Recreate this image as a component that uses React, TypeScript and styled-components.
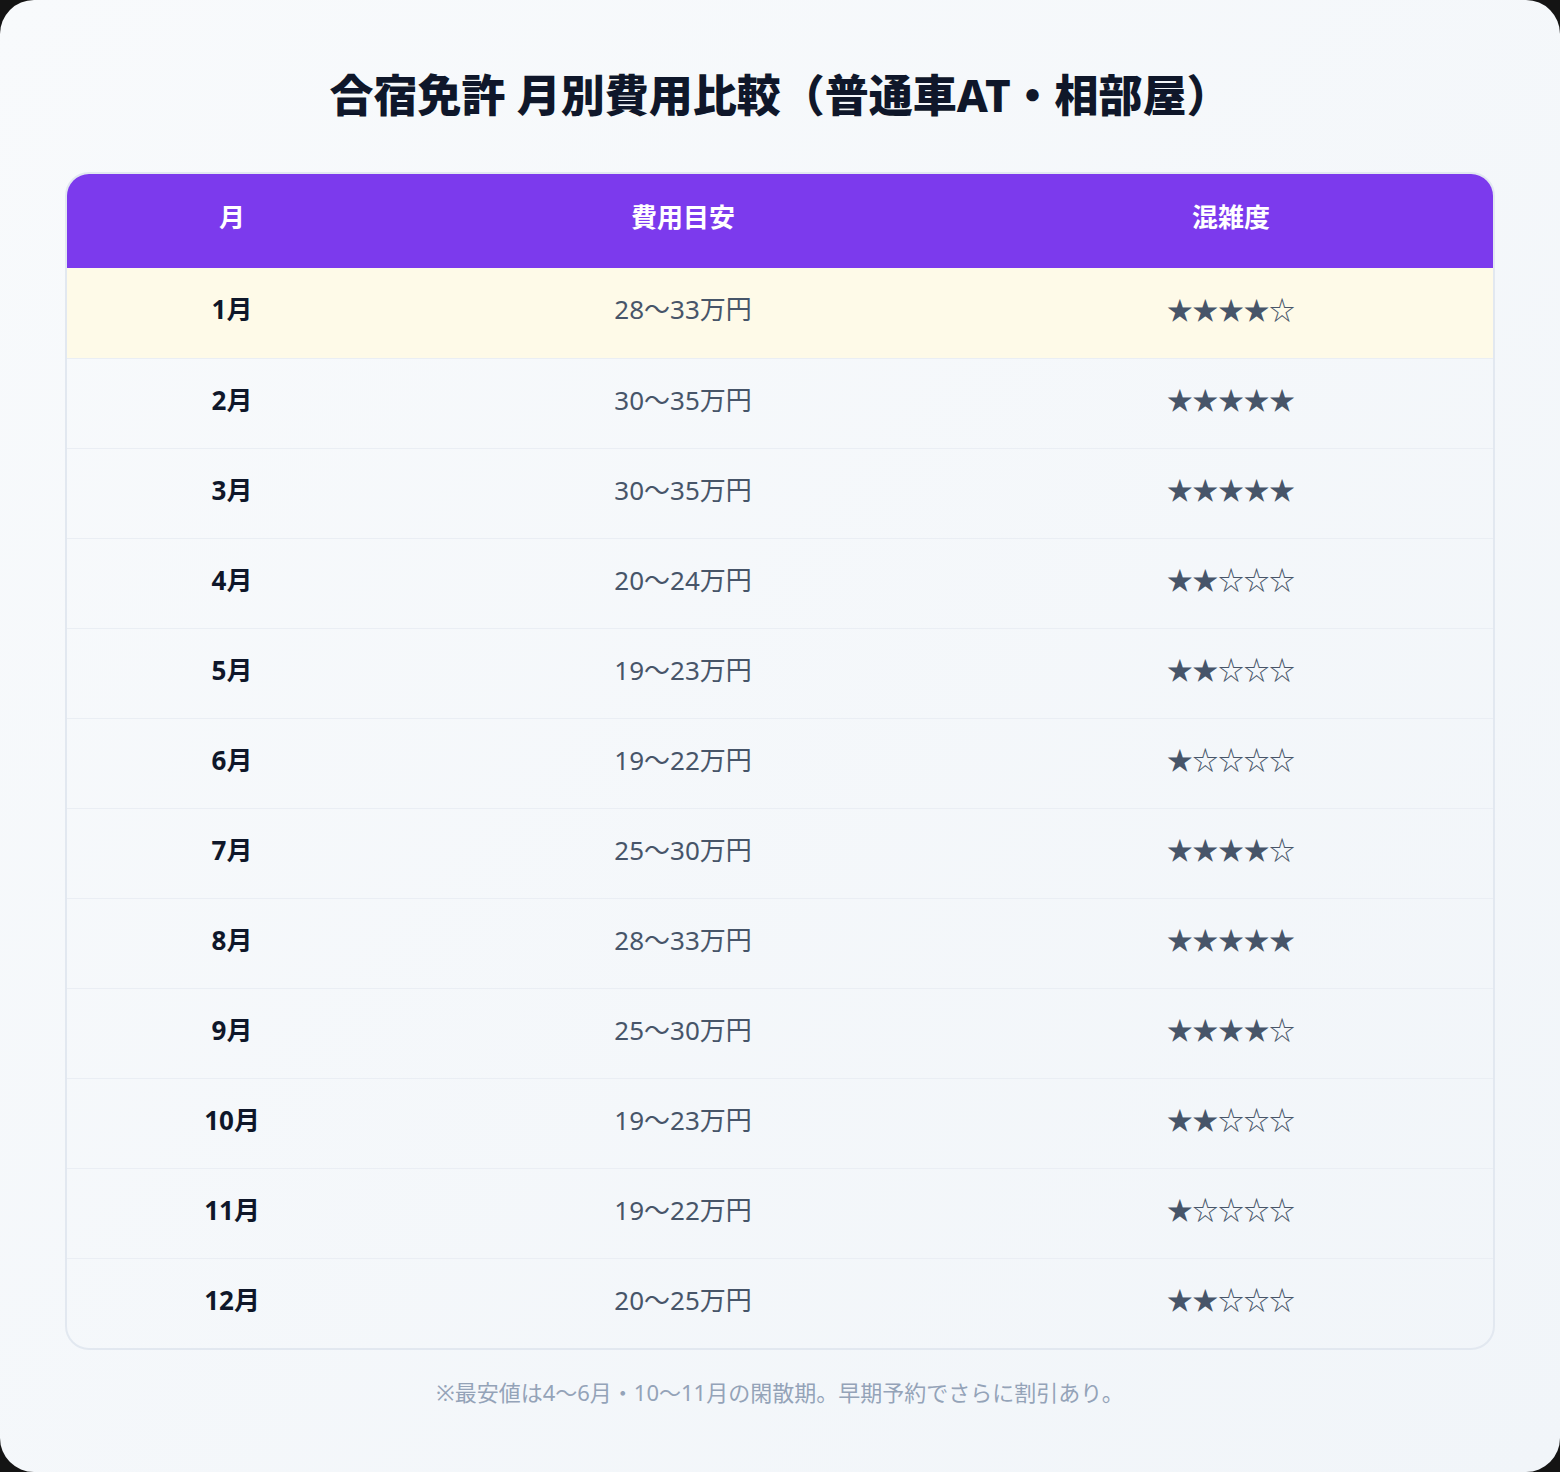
import React from "react";
import styled, { createGlobalStyle } from "styled-components";

interface MonthRow {
  month: string;
  cost: string;
  level: number;
}

const rows: MonthRow[] = [
  { month: "1月", cost: "28〜33万円", level: 4 },
  { month: "2月", cost: "30〜35万円", level: 5 },
  { month: "3月", cost: "30〜35万円", level: 5 },
  { month: "4月", cost: "20〜24万円", level: 2 },
  { month: "5月", cost: "19〜23万円", level: 2 },
  { month: "6月", cost: "19〜22万円", level: 1 },
  { month: "7月", cost: "25〜30万円", level: 4 },
  { month: "8月", cost: "28〜33万円", level: 5 },
  { month: "9月", cost: "25〜30万円", level: 4 },
  { month: "10月", cost: "19〜23万円", level: 2 },
  { month: "11月", cost: "19〜22万円", level: 1 },
  { month: "12月", cost: "20〜25万円", level: 2 },
];

const stars = (n: number) => "★".repeat(n) + "☆".repeat(5 - n);

export default function App() {
  return (
    <>
      <GlobalStyle />
      <Page>
        <Title>合宿免許 月別費用比較（普通車AT・相部屋）</Title>
        <TableWrap>
          <Table>
            <colgroup>
              <col style={{ width: "23.15%" }} />
              <col style={{ width: "40.1%" }} />
              <col />
            </colgroup>
            <thead>
              <tr>
                <HeadCell>月</HeadCell>
                <HeadCell>費用目安</HeadCell>
                <HeadCell>混雑度</HeadCell>
              </tr>
            </thead>
            <tbody>
              {rows.map((r, i) => (
                <Row key={r.month} $highlight={i === 0} $last={i === rows.length - 1}>
                  <MonthCell>{r.month}</MonthCell>
                  <CostCell>{r.cost}</CostCell>
                  <StarCell>{stars(r.level)}</StarCell>
                </Row>
              ))}
            </tbody>
          </Table>
        </TableWrap>
        <Note>※最安値は4〜6月・10〜11月の閑散期。早期予約でさらに割引あり。</Note>
      </Page>
    </>
  );
}

const GlobalStyle = createGlobalStyle`
  html, body {
    margin: 0;
    padding: 0;
    background: #141414;
  }
  body {
    font-family: "Noto Sans", "Noto Sans CJK JP", sans-serif;
  }
`;

const Page = styled.div`
  box-sizing: border-box;
  width: 1560px;
  height: 1472px;
  border-radius: 34px;
  overflow: hidden;
  background: linear-gradient(135deg, #f8fafc 0%, #f1f5f9 100%);
  padding: 63px 65px 0;
`;

const Title = styled.h1`
  margin: 0 0 45px;
  text-align: center;
  font-size: 44px;
  line-height: 64px;
  font-weight: 800;
  color: #0f172a;
`;

const TableWrap = styled.div`
  border: 2px solid #e2e8f0;
  border-radius: 24px;
  overflow: hidden;
`;

const Table = styled.table`
  width: 100%;
  border-collapse: collapse;
  table-layout: fixed;
`;

const HeadCell = styled.th`
  box-sizing: border-box;
  height: 94px;
  padding: 0 0 10px;
  background: #7c3aed;
  color: #ffffff;
  font-size: 26px;
  font-weight: 700;
  text-align: center;
`;

const Row = styled.tr<{ $highlight: boolean; $last: boolean }>`
  height: 90px;
  background: ${(p) => (p.$highlight ? "#fefae8" : "transparent")};
  border-bottom: ${(p) => (p.$last ? "none" : "1px solid #eaeef4")};
`;

const Cell = styled.td`
  box-sizing: border-box;
  height: 90px;
  padding: 0 0 9px;
  text-align: center;
  font-size: 26px;
  vertical-align: middle;
`;

const MonthCell = styled(Cell)`
  font-weight: 700;
  color: #0f172a;
`;

const CostCell = styled(Cell)`
  color: #475569;
`;

const StarCell = styled(Cell)`
  color: #475569;
  font-family: "Noto Sans CJK JP", sans-serif;
  font-size: 25.6px;
`;

const Note = styled.p`
  margin: 26px 0 0;
  text-align: center;
  font-size: 22px;
  line-height: 32px;
  color: #94a3b8;
`;
